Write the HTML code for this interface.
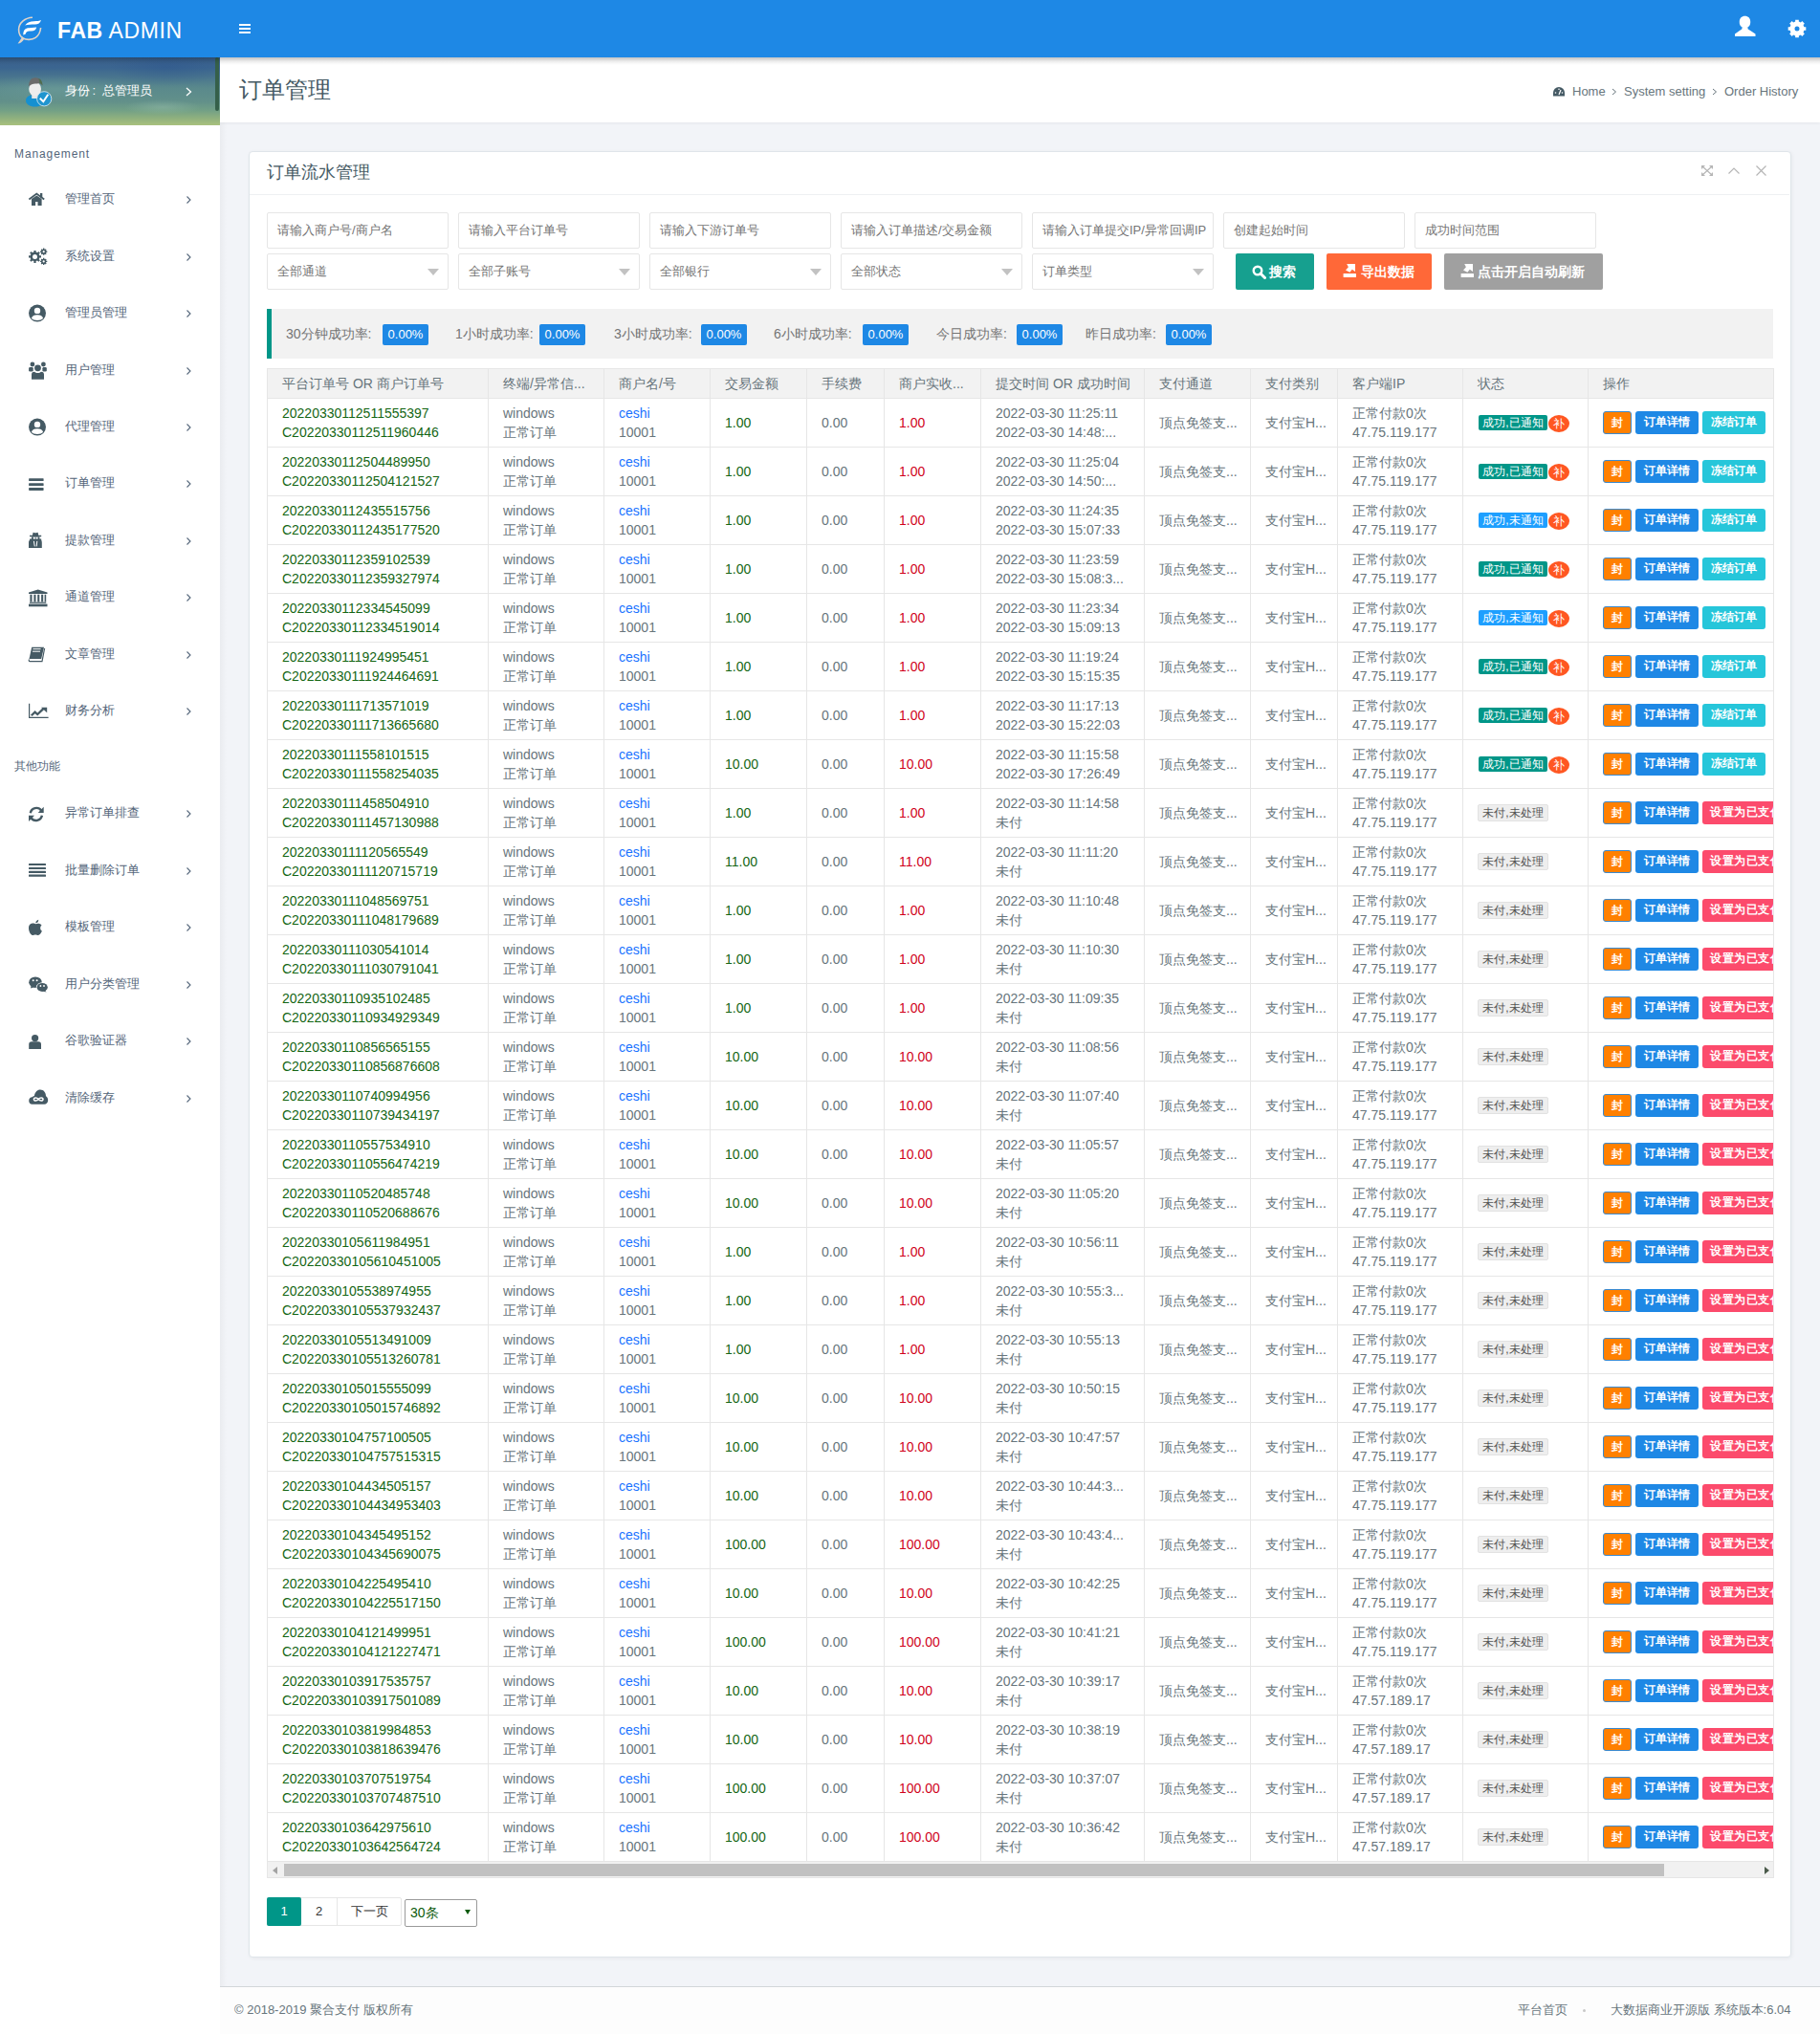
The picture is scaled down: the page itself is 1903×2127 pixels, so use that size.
<!DOCTYPE html><html><head><meta charset="utf-8"><style>
*{box-sizing:border-box;margin:0;padding:0}
html,body{width:1903px;height:2127px;overflow:hidden;background:#f2f4f8;font-family:"Liberation Sans",sans-serif;color:#67757c}
.a{position:absolute}
#hdr{left:0;top:0;width:1903px;height:60px;background:#1e88e5;z-index:5}
#hsh{left:0;top:60px;width:1903px;height:8px;z-index:6;background:linear-gradient(180deg,rgba(0,0,0,.23) 0,rgba(0,0,0,.2) 12%,rgba(0,0,0,.14) 30%,rgba(0,0,0,.08) 50%,rgba(0,0,0,.04) 70%,rgba(0,0,0,0) 100%)}
#side{left:0;top:60px;width:230px;height:2067px;background:#fff;z-index:3}
#prof{left:0;top:60px;width:230px;height:71px;z-index:4;overflow:hidden;
 background:linear-gradient(180deg,#3a628e 0%,#3b6590 15%,#4a768e 30%,#5a898c 45%,#62908a 65%,#72a086 78%,#90b17e 90%,#a9c17e 100%)}
#titlebar{left:230px;top:60px;width:1673px;height:68px;background:#fff;box-shadow:0 1px 3px rgba(0,0,0,.06)}
.mi{position:absolute;left:0;width:230px;height:20px;font-size:13px;line-height:20px;color:#54667a}
.mi .t{position:absolute;left:68px;top:0}
.mi .ch{position:absolute;left:193px;top:6px;width:10px;height:10px}
.mi svg.ic{position:absolute;left:28px;top:0}
#card{left:260px;top:158px;width:1613px;height:1889px;background:#fff;border:1px solid #dfe5ea;border-radius:4px;box-shadow:1px 1px 4px rgba(0,0,0,.05)}
.inp{position:absolute;height:38px;border:1px solid #e6e6e6;border-radius:2px;background:#fff;font-size:13px;line-height:36px;padding-left:10px;color:#757575}
.tri{position:absolute;width:0;height:0;border-left:6px solid transparent;border-right:6px solid transparent;border-top:7px solid #c2c2c2}
.btn{position:absolute;height:38px;line-height:38px;color:#fff;font-size:14px;text-align:center;border-radius:2px;font-weight:bold}
.lbl{position:absolute;font-size:14px;line-height:20px;color:#757575;top:339px}
.bdg{position:absolute;top:339px;height:22px;width:48px;background:#1e88e5;color:#fff;border-radius:2px;font-size:13px;line-height:22px;text-align:center}
.vl{position:absolute;width:1px;background:#e6e6e6}
.hl{position:absolute;height:1px;background:#e6e6e6}
.th{position:absolute;font-size:14px;line-height:30px;color:#67757c;white-space:nowrap}
.td{position:absolute;font-size:14px;line-height:20px;color:#67757c;white-space:nowrap}
.g{color:#146614}
.lk{color:#1a73ff}
.rd{color:#d0021b}
.st{position:absolute;height:16px;width:72px;border-radius:2px;font-size:12px;font-weight:500;line-height:16px;color:#fff;text-align:center;white-space:nowrap;overflow:hidden}
.bu{position:absolute;width:22px;height:18px;border-radius:50%;background:#ff5722;color:#fff;font-size:12px;font-weight:500;line-height:18px;text-align:center}
.bx{position:absolute;height:24px;line-height:23px;border-radius:3px;color:#fff;font-size:12px;font-weight:600;text-align:center;white-space:nowrap;overflow:hidden}
</style></head><body>
<div id="hdr" class="a">
<svg class="a" style="left:14px;top:14px" width="36" height="36" viewBox="0 0 36 36"><path d="M20 4.3 C12 4.6 5.6 10 5.6 17 C5.6 21.5 7.6 24.5 10.2 26 C13.5 28 19.5 27.8 23.2 25.3 C26.3 23.2 28.2 19.8 28.6 15" fill="none" stroke="#ddd3ca" stroke-width="1.6"/><path d="M9.6 24.2 L4.6 31.6 C7.2 31.4 9.6 30 11.2 26.8 Z" fill="#ddd3ca"/><path d="M12.2 12.6 C14.5 9.2 17.5 8.2 21.5 8.2 C24.8 8.2 27.2 7.8 29 7 C28 10.2 26 11.6 22.5 11.6 C18.5 11.6 15 11.6 12.2 12.6 Z" fill="#fff"/><path d="M10.3 22.6 C10.3 17.4 12.3 15.2 16.5 15.2 L24.2 14.6 C23.6 17.2 22 18.6 18.6 18.6 C15 18.6 13.4 19 12.6 21.8 Z" fill="#fff"/></svg>
<div class="a" style="left:60px;top:17px;font-size:23px;line-height:30px;color:#fff;white-space:nowrap;letter-spacing:.6px"><b>FAB</b> ADMIN</div>
<div class="a" style="left:250px;top:25px;width:12px;height:2px;background:#fff"></div><div class="a" style="left:250px;top:29px;width:12px;height:2px;background:#fff"></div><div class="a" style="left:250px;top:33px;width:12px;height:2px;background:#fff"></div>
<svg class="a" style="left:1813px;top:16px" width="24" height="23" viewBox="0 0 24 23"><path d="M11.5 0.7 C14.9 0.7 17.2 3 17.2 6.5 V7.6 C17.2 10.9 15 13.3 11.5 13.3 C8 13.3 5.8 10.9 5.8 7.6 V6.5 C5.8 3 8.1 0.7 11.5 0.7 Z" fill="#fff"/><path d="M8.5 12.5 H14.5 V14.3 L22.5 19.6 V22 H1 V19.6 L8.5 14.3 Z" fill="#fff"/></svg>
<svg class="a" style="left:1869px;top:19.5px" width="20" height="20" viewBox="0 0 20 20"><path fill="#fff" fill-rule="evenodd" d="M19.32 8.15 L19.32 11.85 L17.38 11.83 L16.51 13.92 L17.90 15.28 L15.28 17.90 L13.92 16.51 L11.83 17.38 L11.85 19.32 L8.15 19.32 L8.17 17.38 L6.08 16.51 L4.72 17.90 L2.10 15.28 L3.49 13.92 L2.62 11.83 L0.68 11.85 L0.68 8.15 L2.62 8.17 L3.49 6.08 L2.10 4.72 L4.72 2.10 L6.08 3.49 L8.17 2.62 L8.15 0.68 L11.85 0.68 L11.83 2.62 L13.92 3.49 L15.28 2.10 L17.90 4.72 L16.51 6.08 L17.38 8.17 Z M7.50 10.00 a2.50 2.50 0 1 0 5.00 0 a2.50 2.50 0 1 0 -5.00 0 Z"/></svg>
</div>
<div id="hsh" class="a"></div>
<div id="side" class="a"></div>
<div id="prof" class="a">
<div class="a" style="left:115px;top:-10px;width:120px;height:40px;background:radial-gradient(closest-side,rgba(40,80,140,.35),rgba(40,80,140,0) 100%)"></div><div class="a" style="left:-30px;top:18px;width:180px;height:30px;border-radius:50%;background:radial-gradient(closest-side,rgba(130,180,170,.3),rgba(130,180,170,0) 100%)"></div><div class="a" style="left:130px;top:44px;width:80px;height:16px;background:radial-gradient(closest-side,rgba(170,205,190,.3),rgba(170,205,190,0) 100%)"></div>
<div class="a" style="left:225px;top:0;width:4px;height:56px;border-radius:2px;background:#35604a"></div>
<svg class="a" style="left:22px;top:16px" width="36" height="38" viewBox="0 0 36 38"><path d="M5 29 C5 25.3 8.5 23.5 12.5 23.5 L18 23.5 C21.5 23.5 23.5 26 23.5 30 C23.5 34 19.5 35.5 14.5 35.5 C9 35.5 5 33 5 29 Z" fill="#1590d0"/><rect x="11.2" y="20" width="7" height="7" fill="#e6e6e6"/><ellipse cx="14.6" cy="17" rx="6.4" ry="7.6" fill="#ededed"/><path d="M8.2 14.5 C7.8 8.5 11 5.3 15 5.3 C19.2 5.3 22.4 8.2 22.4 13.5 C21.2 11.2 19.2 10.6 17 11.6 C14 11 10.2 11.6 8.2 14.5 Z" fill="#6b6b6b"/><path d="M18.5 6 C21 7 22.4 9.5 22.4 13.5 C21.6 12 20.6 11.2 19.4 11 Z" fill="#4f6e4f"/><circle cx="24.2" cy="27.3" r="7.6" fill="#2095cf" stroke="#cfe4ee" stroke-width=".9"/><path d="M19.8 26.8 L23.3 30.2 L28.3 22.8" fill="none" stroke="#fff" stroke-width="2"/></svg>
<div class="a" style="left:68px;top:25px;font-size:13px;line-height:20px;color:#fff;white-space:nowrap">身份<span style="margin:0 7px 0 2.5px">:</span>总管理员</div>
<svg class="a" style="left:194px;top:31px" width="7" height="10" viewBox="0 0 7 10"><path d="M1 1 L5.5 5 L1 9" fill="none" stroke="#fff" stroke-width="1.3"/></svg>
</div>
<div class="a" style="left:15px;top:152px;font-size:12px;line-height:18px;letter-spacing:.9px;color:#54667a;z-index:4">Management</div>
<div class="a" style="left:15px;top:792px;font-size:12px;line-height:18px;color:#54667a;z-index:4">其他功能</div>
<div class="mi" style="top:198px;z-index:4"><svg class="ic" width="24" height="22" viewBox="0 0 24 22" style="top:0"><path d="M2.4 10.6 L10.3 4.6 L18.2 10.6" fill="none" stroke="#455a64" stroke-width="1.9"/><rect x="14" y="4" width="2.3" height="4.6" fill="#455a64"/><path d="M5 10.1 L10.3 6.4 L15.6 10.1 V16.9 H11.5 V13 H9.1 V16.9 H5 Z" fill="#455a64"/></svg><span class="t">管理首页</span><svg class="ch" viewBox="0 0 10 10"><path d="M2.5 1.5 L6 5 L2.5 8.5" fill="none" stroke="#54667a" stroke-width="1.1"/></svg></div>
<div class="mi" style="top:258px;z-index:4"><svg class="ic" width="24" height="22" viewBox="0 0 24 22" style="top:0"><g fill="#455a64"><circle cx="8.5" cy="10.4" r="4.9"/><g stroke="#455a64" stroke-width="2.2"><path d="M8.5 3.9 V16.9 M2 10.4 H15 M3.9 5.8 L13.1 15 M13.1 5.8 L3.9 15"/></g><circle cx="17.7" cy="5.2" r="2.6"/><circle cx="17.7" cy="15.4" r="2.6"/><g stroke="#455a64" stroke-width="1.4"><path d="M17.7 1.6 V8.8 M14.1 5.2 H21.3 M15.2 2.7 L20.2 7.7 M20.2 2.7 L15.2 7.7"/><path d="M17.7 11.8 V19 M14.1 15.4 H21.3 M15.2 12.9 L20.2 17.9 M20.2 12.9 L15.2 17.9"/></g></g><circle cx="8.5" cy="10.4" r="2.5" fill="#fff"/><circle cx="17.7" cy="5.2" r="1.1" fill="#fff"/><circle cx="17.7" cy="15.4" r="1.1" fill="#fff"/></svg><span class="t">系统设置</span><svg class="ch" viewBox="0 0 10 10"><path d="M2.5 1.5 L6 5 L2.5 8.5" fill="none" stroke="#54667a" stroke-width="1.1"/></svg></div>
<div class="mi" style="top:317px;z-index:4"><svg class="ic" width="24" height="22" viewBox="0 0 24 22" style="top:0"><circle cx="11" cy="10.6" r="9" fill="#455a64"/><circle cx="11" cy="7.9" r="3.2" fill="#fff"/><path d="M4.9 15.8 C5.6 13.3 7.9 12.3 11 12.3 C14.1 12.3 16.4 13.3 17.1 15.8 C15.8 17.4 13.6 18 11 18 C8.4 18 6.2 17.4 4.9 15.8 Z" fill="#fff"/></svg><span class="t">管理员管理</span><svg class="ch" viewBox="0 0 10 10"><path d="M2.5 1.5 L6 5 L2.5 8.5" fill="none" stroke="#54667a" stroke-width="1.1"/></svg></div>
<div class="mi" style="top:377px;z-index:4"><svg class="ic" width="24" height="22" viewBox="0 0 24 22" style="top:0"><g fill="#455a64"><circle cx="5.9" cy="4" r="2.4"/><circle cx="17.4" cy="4" r="2.4"/><circle cx="11.5" cy="7.8" r="3.4"/><rect x="2.1" y="7" width="4.6" height="4.6" rx="1.3"/><rect x="16.4" y="7" width="4.4" height="4.6" rx="1.3"/><path d="M5 19.7 V14.5 C5 12.5 6.5 11.8 8 11.8 C9 12.6 10 13 11.5 13 C13 13 14 12.6 15 11.8 C16.5 11.8 18 12.5 18 14.5 V19.7 Z"/></g></svg><span class="t">用户管理</span><svg class="ch" viewBox="0 0 10 10"><path d="M2.5 1.5 L6 5 L2.5 8.5" fill="none" stroke="#54667a" stroke-width="1.1"/></svg></div>
<div class="mi" style="top:436px;z-index:4"><svg class="ic" width="24" height="22" viewBox="0 0 24 22" style="top:0"><circle cx="11" cy="10.6" r="9" fill="#455a64"/><circle cx="11" cy="7.9" r="3.2" fill="#fff"/><path d="M4.9 15.8 C5.6 13.3 7.9 12.3 11 12.3 C14.1 12.3 16.4 13.3 17.1 15.8 C15.8 17.4 13.6 18 11 18 C8.4 18 6.2 17.4 4.9 15.8 Z" fill="#fff"/></svg><span class="t">代理管理</span><svg class="ch" viewBox="0 0 10 10"><path d="M2.5 1.5 L6 5 L2.5 8.5" fill="none" stroke="#54667a" stroke-width="1.1"/></svg></div>
<div class="mi" style="top:495px;z-index:4"><svg class="ic" width="24" height="22" viewBox="0 0 24 22" style="top:0"><g fill="#455a64"><rect x="2.1" y="5.2" width="15.5" height="2.8" rx=".6"/><rect x="2.1" y="10.2" width="15.5" height="2.8" rx=".6"/><rect x="2.1" y="15.1" width="15.5" height="2.8" rx=".6"/></g></svg><span class="t">订单管理</span><svg class="ch" viewBox="0 0 10 10"><path d="M2.5 1.5 L6 5 L2.5 8.5" fill="none" stroke="#54667a" stroke-width="1.1"/></svg></div>
<div class="mi" style="top:555px;z-index:4"><svg class="ic" width="24" height="22" viewBox="0 0 24 22" style="top:0"><g fill="#455a64"><path d="M6.6 1.7 L8.6 2.2 H9.6 L11.6 1.7 L12.3 4.8 H15.2 V6.3 H3 V4.8 H5.9 Z"/><rect x="5" y="6.3" width="8.4" height="2.8"/><path d="M3 8.6 H15.2 V9.8 C15.6 10.5 15.8 11.3 15.8 12.5 V17.9 H2 V12.5 C2 11.3 2.3 10.5 3 9.8 Z"/></g><rect x="6.8" y="6.8" width="2" height="1.8" fill="#fff"/><rect x="9.6" y="6.8" width="2" height="1.8" fill="#fff"/><path d="M7.4 10.8 L8.3 16.4 M10.8 10.8 L10.2 16.4" stroke="#fff" stroke-width="1"/></svg><span class="t">提款管理</span><svg class="ch" viewBox="0 0 10 10"><path d="M2.5 1.5 L6 5 L2.5 8.5" fill="none" stroke="#54667a" stroke-width="1.1"/></svg></div>
<div class="mi" style="top:614px;z-index:4"><svg class="ic" width="24" height="22" viewBox="0 0 24 22" style="top:0"><g fill="#455a64"><path d="M11.7 2.5 L21.5 5.6 V7 H2 V5.6 Z"/><rect x="3.4" y="7.7" width="2.1" height="7.8"/><rect x="7.4" y="7.7" width="2.1" height="7.8"/><rect x="11.2" y="7.7" width="2.1" height="7.8"/><rect x="15.1" y="7.7" width="2.1" height="7.8"/><rect x="18.6" y="7.7" width="1.6" height="7.8"/><rect x="3" y="15.6" width="17.2" height="1.2"/><rect x="2" y="17.6" width="19.5" height="2.7"/></g></svg><span class="t">通道管理</span><svg class="ch" viewBox="0 0 10 10"><path d="M2.5 1.5 L6 5 L2.5 8.5" fill="none" stroke="#54667a" stroke-width="1.1"/></svg></div>
<div class="mi" style="top:674px;z-index:4"><svg class="ic" width="24" height="22" viewBox="0 0 24 22" style="top:0"><path d="M5.2 2.7 H18 L15.2 15 H2.5 Z" fill="#455a64"/><path d="M6.4 4.7 H14.6 M6 7.2 H14" stroke="#fff" stroke-width="1"/><path d="M18.6 4 L16 17.6 H3.2 C2.3 17.6 2 16.6 2.5 15.6" fill="none" stroke="#455a64" stroke-width="1.2"/></svg><span class="t">文章管理</span><svg class="ch" viewBox="0 0 10 10"><path d="M2.5 1.5 L6 5 L2.5 8.5" fill="none" stroke="#54667a" stroke-width="1.1"/></svg></div>
<div class="mi" style="top:733px;z-index:4"><svg class="ic" width="24" height="22" viewBox="0 0 24 22" style="top:0"><path d="M2.6 2.8 V17.4 H22.6" fill="none" stroke="#455a64" stroke-width="1.2"/><path d="M4.8 15.3 L8.6 11.6 L11.2 14 L17.4 8.1" fill="none" stroke="#455a64" stroke-width="2.3"/><path d="M15 6.8 H21.2 V12.2 Z" fill="#455a64"/></svg><span class="t">财务分析</span><svg class="ch" viewBox="0 0 10 10"><path d="M2.5 1.5 L6 5 L2.5 8.5" fill="none" stroke="#54667a" stroke-width="1.1"/></svg></div>
<div class="mi" style="top:840px;z-index:4"><svg class="ic" width="24" height="22" viewBox="0 0 24 22" style="top:0"><g fill="none" stroke="#455a64" stroke-width="2.4"><path d="M3.8 10.2 A6.3 6.3 0 0 1 15.2 7.6"/><path d="M15.9 12.8 A6.3 6.3 0 0 1 4.5 15.2"/></g><g fill="#455a64"><path d="M17.7 3.8 V10 H11.7 Z"/><path d="M2 19 V12.8 H8 Z"/></g></svg><span class="t">异常订单排查</span><svg class="ch" viewBox="0 0 10 10"><path d="M2.5 1.5 L6 5 L2.5 8.5" fill="none" stroke="#54667a" stroke-width="1.1"/></svg></div>
<div class="mi" style="top:900px;z-index:4"><svg class="ic" width="24" height="22" viewBox="0 0 24 22" style="top:0"><g fill="#455a64"><rect x="2" y="3" width="18" height="2.1" rx=".5"/><rect x="2" y="6.9" width="18" height="2.1" rx=".5"/><rect x="2" y="10.8" width="18" height="2.1" rx=".5"/><rect x="2" y="14.6" width="18" height="2.1" rx=".5"/></g></svg><span class="t">批量删除订单</span><svg class="ch" viewBox="0 0 10 10"><path d="M2.5 1.5 L6 5 L2.5 8.5" fill="none" stroke="#54667a" stroke-width="1.1"/></svg></div>
<div class="mi" style="top:959px;z-index:4"><svg class="ic" width="24" height="22" viewBox="0 0 24 22" style="top:0"><path d="M9.2 7.3 C7.8 6.2 2 5.7 2 11.6 C2 15.3 4.3 19.1 6 19.1 C7.2 19.1 7.6 18.4 9 18.4 C10.4 18.4 10.8 19.1 12 19.1 C13.5 19.1 15.2 16.6 15.9 14.6 C13.8 13.6 13.6 9.9 15.6 8.5 C14.3 6.5 11 6.4 9.2 7.3 Z" fill="#455a64"/><path d="M9.3 6.3 C9.3 4.5 10.6 2.9 12.3 2.7 C12.3 4.6 11.1 6.1 9.3 6.3 Z" fill="#455a64"/></svg><span class="t">模板管理</span><svg class="ch" viewBox="0 0 10 10"><path d="M2.5 1.5 L6 5 L2.5 8.5" fill="none" stroke="#54667a" stroke-width="1.1"/></svg></div>
<div class="mi" style="top:1019px;z-index:4"><svg class="ic" width="24" height="22" viewBox="0 0 24 22" style="top:0"><ellipse cx="9" cy="8.2" rx="6.8" ry="5.8" fill="#455a64"/><path d="M4.5 12 L4 14.6 L7.5 13.3 Z" fill="#455a64"/><circle cx="6.7" cy="6.2" r="1" fill="#fff"/><circle cx="10.6" cy="6.2" r="1" fill="#fff"/><ellipse cx="16.2" cy="13.4" rx="6.4" ry="5.2" fill="#fff"/><ellipse cx="16.2" cy="13.4" rx="5.6" ry="4.5" fill="#455a64"/><path d="M18.8 16.5 L20.6 18.6 L16.5 17.6 Z" fill="#455a64"/><circle cx="14.4" cy="12" r=".9" fill="#fff"/><circle cx="18" cy="12" r=".9" fill="#fff"/></svg><span class="t">用户分类管理</span><svg class="ch" viewBox="0 0 10 10"><path d="M2.5 1.5 L6 5 L2.5 8.5" fill="none" stroke="#54667a" stroke-width="1.1"/></svg></div>
<div class="mi" style="top:1078px;z-index:4"><svg class="ic" width="24" height="22" viewBox="0 0 24 22" style="top:0"><circle cx="8.6" cy="7.6" r="3.6" fill="#455a64"/><path d="M2.2 18.9 V14 C2.2 12 3.3 11.2 5 11.2 H12.2 C13.9 11.2 15 12 15 14 V18.9 Z" fill="#455a64"/></svg><span class="t">谷歌验证器</span><svg class="ch" viewBox="0 0 10 10"><path d="M2.5 1.5 L6 5 L2.5 8.5" fill="none" stroke="#54667a" stroke-width="1.1"/></svg></div>
<div class="mi" style="top:1138px;z-index:4"><svg class="ic" width="24" height="22" viewBox="0 0 24 22" style="top:0"><path d="M5.6 16.8 C3.6 16.8 2.2 15.2 2.2 13 C2.2 10.9 3.7 9.4 5.7 9.3 C6.1 8.6 6.9 8 7.9 7.9 C8.6 4.1 11 1.5 14.1 1.5 C17.6 1.5 20 4.3 20 8.3 C21.4 9.1 22.2 10.8 22.2 12.6 C22.2 15 20.5 16.8 18.4 16.8 Z" fill="#455a64"/><path d="M12.2 11.5 C10.6 9.5 7.4 9.4 7.4 11.5 C7.4 13.6 10.6 13.5 12.2 11.5 C13.8 9.5 17 9.4 17 11.5 C17 13.6 13.8 13.5 12.2 11.5 Z" fill="none" stroke="#fff" stroke-width="1.5"/></svg><span class="t">清除缓存</span><svg class="ch" viewBox="0 0 10 10"><path d="M2.5 1.5 L6 5 L2.5 8.5" fill="none" stroke="#54667a" stroke-width="1.1"/></svg></div>
<div id="titlebar" class="a"></div>
<div class="a" style="left:250px;top:78px;font-size:24px;line-height:32px;color:#455a64;white-space:nowrap">订单管理</div>
<svg class="a" style="left:1624px;top:91px" width="12" height="10" viewBox="0 0 12 10"><path d="M6 0 A6 6 0 0 0 0 6 V9.5 H12 V6 A6 6 0 0 0 6 0z" fill="#455a64"/><path d="M6 8 L8 3" stroke="#fff" stroke-width="1.2"/><circle cx="2.5" cy="6" r=".8" fill="#fff"/><circle cx="9.5" cy="6" r=".8" fill="#fff"/><circle cx="6" cy="2.3" r=".8" fill="#fff"/></svg>
<div class="a" style="left:1644px;top:87px;font-size:13px;line-height:18px;color:#67757c;white-space:nowrap">Home</div>
<svg class="a" style="left:1685px;top:92px" width="6" height="8" viewBox="0 0 6 8"><path d="M1 1 L4.5 4 L1 7" fill="none" stroke="#67757c" stroke-width="1"/></svg>
<div class="a" style="left:1698px;top:87px;font-size:13px;line-height:18px;color:#67757c;white-space:nowrap">System setting</div>
<svg class="a" style="left:1790px;top:92px" width="6" height="8" viewBox="0 0 6 8"><path d="M1 1 L4.5 4 L1 7" fill="none" stroke="#67757c" stroke-width="1"/></svg>
<div class="a" style="left:1803px;top:87px;font-size:13px;line-height:18px;color:#67757c;white-space:nowrap">Order History</div>
<div class="a" style="left:230px;top:128px;width:7px;height:1949px;background:linear-gradient(90deg,rgba(0,0,0,.035),rgba(0,0,0,0))"></div>
<div id="card" class="a"></div>
<div class="a" style="left:261px;top:203px;width:1610px;height:1px;background:#eef0f2"></div>
<div class="a" style="left:279px;top:168px;font-size:18px;line-height:24px;color:#455a64;white-space:nowrap">订单流水管理</div>
<svg class="a" style="left:1779px;top:173px" width="12" height="11" viewBox="0 0 12 11"><path d="M1 1 L11 10 M11 1 L1 10" stroke="#b5b5b5" stroke-width="1.1"/><path d="M0 0 H4 L0 4z M12 0 H8 L12 4z M0 11 H4 L0 7z M12 11 H8 L12 7z" fill="#b5b5b5"/></svg>
<svg class="a" style="left:1807px;top:175px" width="12" height="7" viewBox="0 0 12 7"><path d="M0.5 6.5 L6 1 L11.5 6.5" fill="none" stroke="#b5b5b5" stroke-width="1.2"/></svg>
<svg class="a" style="left:1836px;top:173px" width="11" height="11" viewBox="0 0 11 11"><path d="M0.5 0.5 L10.5 10.5 M10.5 0.5 L0.5 10.5" fill="none" stroke="#b5b5b5" stroke-width="1.2"/></svg>
<div class="inp" style="left:279px;top:222px;width:190px;white-space:nowrap;overflow:hidden">请输入商户号/商户名</div>
<div class="inp" style="left:479px;top:222px;width:190px;white-space:nowrap;overflow:hidden">请输入平台订单号</div>
<div class="inp" style="left:679px;top:222px;width:190px;white-space:nowrap;overflow:hidden">请输入下游订单号</div>
<div class="inp" style="left:879px;top:222px;width:190px;white-space:nowrap;overflow:hidden">请输入订单描述/交易金额</div>
<div class="inp" style="left:1079px;top:222px;width:190px;white-space:nowrap;overflow:hidden">请输入订单提交IP/异常回调IP</div>
<div class="inp" style="left:1279px;top:222px;width:190px;white-space:nowrap;overflow:hidden">创建起始时间</div>
<div class="inp" style="left:1479px;top:222px;width:190px;white-space:nowrap;overflow:hidden">成功时间范围</div>
<div class="inp" style="left:279px;top:265px;width:190px">全部通道</div>
<div class="tri" style="left:447px;top:281px"></div>
<div class="inp" style="left:479px;top:265px;width:190px">全部子账号</div>
<div class="tri" style="left:647px;top:281px"></div>
<div class="inp" style="left:679px;top:265px;width:190px">全部银行</div>
<div class="tri" style="left:847px;top:281px"></div>
<div class="inp" style="left:879px;top:265px;width:190px">全部状态</div>
<div class="tri" style="left:1047px;top:281px"></div>
<div class="inp" style="left:1079px;top:265px;width:190px">订单类型</div>
<div class="tri" style="left:1247px;top:281px"></div>
<div class="btn" style="left:1292px;top:265px;width:82px;background:#16a08f">
<svg style="position:absolute;left:17px;top:12px" width="15" height="15" viewBox="0 0 15 15"><circle cx="6" cy="6" r="4.3" fill="none" stroke="#fff" stroke-width="2.4"/><path d="M9 9 L13.5 13.5" stroke="#fff" stroke-width="3" stroke-linecap="round"/></svg><span style="position:absolute;left:35px;top:0">搜索</span></div>
<div class="btn" style="left:1387px;top:265px;width:110px;background:#ff6838">
<svg style="position:absolute;left:13px;top:5px" width="24" height="24" viewBox="0 0 24 24"><path d="M8.2 6 H17 V14 L13.8 11.8 L11.4 14.8 L7 12.6 L9.9 9.2 Z" fill="#fff"/><rect x="4.6" y="16" width="13.4" height="4" rx=".6" fill="#fff"/></svg><span style="position:absolute;left:36px;top:0">导出数据</span></div>
<div class="btn" style="left:1510px;top:265px;width:166px;background:#a0a0a0">
<svg style="position:absolute;left:13px;top:5px" width="24" height="24" viewBox="0 0 24 24"><path d="M8.2 6 H17 V14 L13.8 11.8 L11.4 14.8 L7 12.6 L9.9 9.2 Z" fill="#fff"/><rect x="4.6" y="16" width="13.4" height="4" rx=".6" fill="#fff"/></svg><span style="position:absolute;left:35px;top:0">点击开启自动刷新</span></div>
<div class="a" style="left:279px;top:323px;width:1575px;height:52px;background:#f2f2f2;border-left:5px solid #009688"></div>
<div class="lbl" style="left:299px">30分钟成功率:</div>
<div class="bdg" style="left:400px">0.00%</div>
<div class="lbl" style="left:476px">1小时成功率:</div>
<div class="bdg" style="left:564px">0.00%</div>
<div class="lbl" style="left:642px">3小时成功率:</div>
<div class="bdg" style="left:733px">0.00%</div>
<div class="lbl" style="left:809px">6小时成功率:</div>
<div class="bdg" style="left:902px">0.00%</div>
<div class="lbl" style="left:979px">今日成功率:</div>
<div class="bdg" style="left:1063px">0.00%</div>
<div class="lbl" style="left:1135px">昨日成功率:</div>
<div class="bdg" style="left:1219px">0.00%</div>
<div class="a" style="left:279px;top:385px;width:1576px;height:31px;background:#f2f2f2"></div>
<div class="vl" style="left:279px;top:385px;height:1561px"></div>
<div class="vl" style="left:510px;top:385px;height:1561px"></div>
<div class="vl" style="left:631px;top:385px;height:1561px"></div>
<div class="vl" style="left:742px;top:385px;height:1561px"></div>
<div class="vl" style="left:843px;top:385px;height:1561px"></div>
<div class="vl" style="left:924px;top:385px;height:1561px"></div>
<div class="vl" style="left:1025px;top:385px;height:1561px"></div>
<div class="vl" style="left:1196px;top:385px;height:1561px"></div>
<div class="vl" style="left:1307px;top:385px;height:1561px"></div>
<div class="vl" style="left:1398px;top:385px;height:1561px"></div>
<div class="vl" style="left:1529px;top:385px;height:1561px"></div>
<div class="vl" style="left:1660px;top:385px;height:1561px"></div>
<div class="vl" style="left:1854px;top:385px;height:1579px"></div>
<div class="hl" style="left:279px;top:385px;width:1576px"></div>
<div class="hl" style="left:279px;top:416px;width:1576px"></div>
<div class="hl" style="left:279px;top:467px;width:1576px"></div>
<div class="hl" style="left:279px;top:518px;width:1576px"></div>
<div class="hl" style="left:279px;top:569px;width:1576px"></div>
<div class="hl" style="left:279px;top:620px;width:1576px"></div>
<div class="hl" style="left:279px;top:671px;width:1576px"></div>
<div class="hl" style="left:279px;top:722px;width:1576px"></div>
<div class="hl" style="left:279px;top:773px;width:1576px"></div>
<div class="hl" style="left:279px;top:824px;width:1576px"></div>
<div class="hl" style="left:279px;top:875px;width:1576px"></div>
<div class="hl" style="left:279px;top:926px;width:1576px"></div>
<div class="hl" style="left:279px;top:977px;width:1576px"></div>
<div class="hl" style="left:279px;top:1028px;width:1576px"></div>
<div class="hl" style="left:279px;top:1079px;width:1576px"></div>
<div class="hl" style="left:279px;top:1130px;width:1576px"></div>
<div class="hl" style="left:279px;top:1181px;width:1576px"></div>
<div class="hl" style="left:279px;top:1232px;width:1576px"></div>
<div class="hl" style="left:279px;top:1283px;width:1576px"></div>
<div class="hl" style="left:279px;top:1334px;width:1576px"></div>
<div class="hl" style="left:279px;top:1385px;width:1576px"></div>
<div class="hl" style="left:279px;top:1436px;width:1576px"></div>
<div class="hl" style="left:279px;top:1487px;width:1576px"></div>
<div class="hl" style="left:279px;top:1538px;width:1576px"></div>
<div class="hl" style="left:279px;top:1589px;width:1576px"></div>
<div class="hl" style="left:279px;top:1640px;width:1576px"></div>
<div class="hl" style="left:279px;top:1691px;width:1576px"></div>
<div class="hl" style="left:279px;top:1742px;width:1576px"></div>
<div class="hl" style="left:279px;top:1793px;width:1576px"></div>
<div class="hl" style="left:279px;top:1844px;width:1576px"></div>
<div class="hl" style="left:279px;top:1895px;width:1576px"></div>
<div class="hl" style="left:279px;top:1946px;width:1576px"></div>
<div class="a" style="left:279px;top:1947px;width:1575px;height:17px;background:#f1f1f1;border-left:1px solid #e6e6e6;border-bottom:1px solid #e6e6e6"></div>
<div class="a" style="left:297px;top:1949px;width:1443px;height:13px;background:#c1c1c1"></div>
<svg class="a" style="left:285px;top:1952px" width="5" height="8" viewBox="0 0 5 8"><path d="M5 0 L0 4 L5 8 Z" fill="#a3a3a3"/></svg>
<svg class="a" style="left:1845px;top:1952px" width="5" height="8" viewBox="0 0 5 8"><path d="M0 0 L5 4 L0 8 Z" fill="#4a5a4a"/></svg>
<div class="th" style="left:295px;top:386px">平台订单号 OR 商户订单号</div>
<div class="th" style="left:526px;top:386px">终端/异常信...</div>
<div class="th" style="left:647px;top:386px">商户名/号</div>
<div class="th" style="left:758px;top:386px">交易金额</div>
<div class="th" style="left:859px;top:386px">手续费</div>
<div class="th" style="left:940px;top:386px">商户实收...</div>
<div class="th" style="left:1041px;top:386px">提交时间 OR 成功时间</div>
<div class="th" style="left:1212px;top:386px">支付通道</div>
<div class="th" style="left:1323px;top:386px">支付类别</div>
<div class="th" style="left:1414px;top:386px">客户端IP</div>
<div class="th" style="left:1545px;top:386px">状态</div>
<div class="th" style="left:1676px;top:386px">操作</div>
<div class="td g" style="left:295px;top:422px">20220330112511555397<br>C20220330112511960446</div>
<div class="td" style="left:526px;top:422px">windows<br>正常订单</div>
<div class="td" style="left:647px;top:422px"><span class="lk">ceshi</span><br>10001</div>
<div class="td g" style="left:758px;top:432px">1.00</div>
<div class="td" style="left:859px;top:432px">0.00</div>
<div class="td rd" style="left:940px;top:432px">1.00</div>
<div class="td" style="left:1041px;top:422px">2022-03-30 11:25:11<br>2022-03-30 14:48:...</div>
<div class="td" style="left:1212px;top:432px">顶点免签支...</div>
<div class="td" style="left:1323px;top:432px">支付宝H...</div>
<div class="td" style="left:1414px;top:422px">正常付款0次<br>47.75.119.177</div>
<div class="st" style="left:1546px;top:434px;background:#009688">成功,已通知</div>
<div class="bu" style="left:1619px;top:434px">补</div>
<div class="bx" style="left:1676px;top:430px;width:30px;background:#ff8000;border:1px solid #3a8ad0">封</div>
<div class="bx" style="left:1710px;top:430px;width:66px;background:#1e88e5">订单详情</div>
<div class="bx" style="left:1780px;top:430px;width:66px;background:#26c6da">冻结订单</div>
<div class="td g" style="left:295px;top:473px">20220330112504489950<br>C20220330112504121527</div>
<div class="td" style="left:526px;top:473px">windows<br>正常订单</div>
<div class="td" style="left:647px;top:473px"><span class="lk">ceshi</span><br>10001</div>
<div class="td g" style="left:758px;top:483px">1.00</div>
<div class="td" style="left:859px;top:483px">0.00</div>
<div class="td rd" style="left:940px;top:483px">1.00</div>
<div class="td" style="left:1041px;top:473px">2022-03-30 11:25:04<br>2022-03-30 14:50:...</div>
<div class="td" style="left:1212px;top:483px">顶点免签支...</div>
<div class="td" style="left:1323px;top:483px">支付宝H...</div>
<div class="td" style="left:1414px;top:473px">正常付款0次<br>47.75.119.177</div>
<div class="st" style="left:1546px;top:485px;background:#009688">成功,已通知</div>
<div class="bu" style="left:1619px;top:485px">补</div>
<div class="bx" style="left:1676px;top:481px;width:30px;background:#ff8000;border:1px solid #3a8ad0">封</div>
<div class="bx" style="left:1710px;top:481px;width:66px;background:#1e88e5">订单详情</div>
<div class="bx" style="left:1780px;top:481px;width:66px;background:#26c6da">冻结订单</div>
<div class="td g" style="left:295px;top:524px">20220330112435515756<br>C20220330112435177520</div>
<div class="td" style="left:526px;top:524px">windows<br>正常订单</div>
<div class="td" style="left:647px;top:524px"><span class="lk">ceshi</span><br>10001</div>
<div class="td g" style="left:758px;top:534px">1.00</div>
<div class="td" style="left:859px;top:534px">0.00</div>
<div class="td rd" style="left:940px;top:534px">1.00</div>
<div class="td" style="left:1041px;top:524px">2022-03-30 11:24:35<br>2022-03-30 15:07:33</div>
<div class="td" style="left:1212px;top:534px">顶点免签支...</div>
<div class="td" style="left:1323px;top:534px">支付宝H...</div>
<div class="td" style="left:1414px;top:524px">正常付款0次<br>47.75.119.177</div>
<div class="st" style="left:1546px;top:536px;background:#1e9fff">成功,未通知</div>
<div class="bu" style="left:1619px;top:536px">补</div>
<div class="bx" style="left:1676px;top:532px;width:30px;background:#ff8000;border:1px solid #3a8ad0">封</div>
<div class="bx" style="left:1710px;top:532px;width:66px;background:#1e88e5">订单详情</div>
<div class="bx" style="left:1780px;top:532px;width:66px;background:#26c6da">冻结订单</div>
<div class="td g" style="left:295px;top:575px">20220330112359102539<br>C20220330112359327974</div>
<div class="td" style="left:526px;top:575px">windows<br>正常订单</div>
<div class="td" style="left:647px;top:575px"><span class="lk">ceshi</span><br>10001</div>
<div class="td g" style="left:758px;top:585px">1.00</div>
<div class="td" style="left:859px;top:585px">0.00</div>
<div class="td rd" style="left:940px;top:585px">1.00</div>
<div class="td" style="left:1041px;top:575px">2022-03-30 11:23:59<br>2022-03-30 15:08:3...</div>
<div class="td" style="left:1212px;top:585px">顶点免签支...</div>
<div class="td" style="left:1323px;top:585px">支付宝H...</div>
<div class="td" style="left:1414px;top:575px">正常付款0次<br>47.75.119.177</div>
<div class="st" style="left:1546px;top:587px;background:#009688">成功,已通知</div>
<div class="bu" style="left:1619px;top:587px">补</div>
<div class="bx" style="left:1676px;top:583px;width:30px;background:#ff8000;border:1px solid #3a8ad0">封</div>
<div class="bx" style="left:1710px;top:583px;width:66px;background:#1e88e5">订单详情</div>
<div class="bx" style="left:1780px;top:583px;width:66px;background:#26c6da">冻结订单</div>
<div class="td g" style="left:295px;top:626px">20220330112334545099<br>C20220330112334519014</div>
<div class="td" style="left:526px;top:626px">windows<br>正常订单</div>
<div class="td" style="left:647px;top:626px"><span class="lk">ceshi</span><br>10001</div>
<div class="td g" style="left:758px;top:636px">1.00</div>
<div class="td" style="left:859px;top:636px">0.00</div>
<div class="td rd" style="left:940px;top:636px">1.00</div>
<div class="td" style="left:1041px;top:626px">2022-03-30 11:23:34<br>2022-03-30 15:09:13</div>
<div class="td" style="left:1212px;top:636px">顶点免签支...</div>
<div class="td" style="left:1323px;top:636px">支付宝H...</div>
<div class="td" style="left:1414px;top:626px">正常付款0次<br>47.75.119.177</div>
<div class="st" style="left:1546px;top:638px;background:#1e9fff">成功,未通知</div>
<div class="bu" style="left:1619px;top:638px">补</div>
<div class="bx" style="left:1676px;top:634px;width:30px;background:#ff8000;border:1px solid #3a8ad0">封</div>
<div class="bx" style="left:1710px;top:634px;width:66px;background:#1e88e5">订单详情</div>
<div class="bx" style="left:1780px;top:634px;width:66px;background:#26c6da">冻结订单</div>
<div class="td g" style="left:295px;top:677px">20220330111924995451<br>C20220330111924464691</div>
<div class="td" style="left:526px;top:677px">windows<br>正常订单</div>
<div class="td" style="left:647px;top:677px"><span class="lk">ceshi</span><br>10001</div>
<div class="td g" style="left:758px;top:687px">1.00</div>
<div class="td" style="left:859px;top:687px">0.00</div>
<div class="td rd" style="left:940px;top:687px">1.00</div>
<div class="td" style="left:1041px;top:677px">2022-03-30 11:19:24<br>2022-03-30 15:15:35</div>
<div class="td" style="left:1212px;top:687px">顶点免签支...</div>
<div class="td" style="left:1323px;top:687px">支付宝H...</div>
<div class="td" style="left:1414px;top:677px">正常付款0次<br>47.75.119.177</div>
<div class="st" style="left:1546px;top:689px;background:#009688">成功,已通知</div>
<div class="bu" style="left:1619px;top:689px">补</div>
<div class="bx" style="left:1676px;top:685px;width:30px;background:#ff8000;border:1px solid #3a8ad0">封</div>
<div class="bx" style="left:1710px;top:685px;width:66px;background:#1e88e5">订单详情</div>
<div class="bx" style="left:1780px;top:685px;width:66px;background:#26c6da">冻结订单</div>
<div class="td g" style="left:295px;top:728px">20220330111713571019<br>C20220330111713665680</div>
<div class="td" style="left:526px;top:728px">windows<br>正常订单</div>
<div class="td" style="left:647px;top:728px"><span class="lk">ceshi</span><br>10001</div>
<div class="td g" style="left:758px;top:738px">1.00</div>
<div class="td" style="left:859px;top:738px">0.00</div>
<div class="td rd" style="left:940px;top:738px">1.00</div>
<div class="td" style="left:1041px;top:728px">2022-03-30 11:17:13<br>2022-03-30 15:22:03</div>
<div class="td" style="left:1212px;top:738px">顶点免签支...</div>
<div class="td" style="left:1323px;top:738px">支付宝H...</div>
<div class="td" style="left:1414px;top:728px">正常付款0次<br>47.75.119.177</div>
<div class="st" style="left:1546px;top:740px;background:#009688">成功,已通知</div>
<div class="bu" style="left:1619px;top:740px">补</div>
<div class="bx" style="left:1676px;top:736px;width:30px;background:#ff8000;border:1px solid #3a8ad0">封</div>
<div class="bx" style="left:1710px;top:736px;width:66px;background:#1e88e5">订单详情</div>
<div class="bx" style="left:1780px;top:736px;width:66px;background:#26c6da">冻结订单</div>
<div class="td g" style="left:295px;top:779px">20220330111558101515<br>C20220330111558254035</div>
<div class="td" style="left:526px;top:779px">windows<br>正常订单</div>
<div class="td" style="left:647px;top:779px"><span class="lk">ceshi</span><br>10001</div>
<div class="td g" style="left:758px;top:789px">10.00</div>
<div class="td" style="left:859px;top:789px">0.00</div>
<div class="td rd" style="left:940px;top:789px">10.00</div>
<div class="td" style="left:1041px;top:779px">2022-03-30 11:15:58<br>2022-03-30 17:26:49</div>
<div class="td" style="left:1212px;top:789px">顶点免签支...</div>
<div class="td" style="left:1323px;top:789px">支付宝H...</div>
<div class="td" style="left:1414px;top:779px">正常付款0次<br>47.75.119.177</div>
<div class="st" style="left:1546px;top:791px;background:#009688">成功,已通知</div>
<div class="bu" style="left:1619px;top:791px">补</div>
<div class="bx" style="left:1676px;top:787px;width:30px;background:#ff8000;border:1px solid #3a8ad0">封</div>
<div class="bx" style="left:1710px;top:787px;width:66px;background:#1e88e5">订单详情</div>
<div class="bx" style="left:1780px;top:787px;width:66px;background:#26c6da">冻结订单</div>
<div class="td g" style="left:295px;top:830px">20220330111458504910<br>C20220330111457130988</div>
<div class="td" style="left:526px;top:830px">windows<br>正常订单</div>
<div class="td" style="left:647px;top:830px"><span class="lk">ceshi</span><br>10001</div>
<div class="td g" style="left:758px;top:840px">1.00</div>
<div class="td" style="left:859px;top:840px">0.00</div>
<div class="td rd" style="left:940px;top:840px">1.00</div>
<div class="td" style="left:1041px;top:830px">2022-03-30 11:14:58<br>未付</div>
<div class="td" style="left:1212px;top:840px">顶点免签支...</div>
<div class="td" style="left:1323px;top:840px">支付宝H...</div>
<div class="td" style="left:1414px;top:830px">正常付款0次<br>47.75.119.177</div>
<div class="st" style="left:1545px;top:841px;width:74px;height:18px;line-height:16px;background:#eee;border:1px solid #e2e2e2;color:#555">未付,未处理</div>
<div class="bx" style="left:1676px;top:838px;width:30px;background:#ff8000;border:1px solid #3a8ad0">封</div>
<div class="bx" style="left:1710px;top:838px;width:66px;background:#1e88e5">订单详情</div>
<div class="bx" style="left:1780px;top:838px;width:74px;background:#fc4b6c;border-radius:3px 0 0 3px;text-align:left;padding-left:8px;letter-spacing:.5px">设置为已支付</div>
<div class="td g" style="left:295px;top:881px">20220330111120565549<br>C20220330111120715719</div>
<div class="td" style="left:526px;top:881px">windows<br>正常订单</div>
<div class="td" style="left:647px;top:881px"><span class="lk">ceshi</span><br>10001</div>
<div class="td g" style="left:758px;top:891px">11.00</div>
<div class="td" style="left:859px;top:891px">0.00</div>
<div class="td rd" style="left:940px;top:891px">11.00</div>
<div class="td" style="left:1041px;top:881px">2022-03-30 11:11:20<br>未付</div>
<div class="td" style="left:1212px;top:891px">顶点免签支...</div>
<div class="td" style="left:1323px;top:891px">支付宝H...</div>
<div class="td" style="left:1414px;top:881px">正常付款0次<br>47.75.119.177</div>
<div class="st" style="left:1545px;top:892px;width:74px;height:18px;line-height:16px;background:#eee;border:1px solid #e2e2e2;color:#555">未付,未处理</div>
<div class="bx" style="left:1676px;top:889px;width:30px;background:#ff8000;border:1px solid #3a8ad0">封</div>
<div class="bx" style="left:1710px;top:889px;width:66px;background:#1e88e5">订单详情</div>
<div class="bx" style="left:1780px;top:889px;width:74px;background:#fc4b6c;border-radius:3px 0 0 3px;text-align:left;padding-left:8px;letter-spacing:.5px">设置为已支付</div>
<div class="td g" style="left:295px;top:932px">20220330111048569751<br>C20220330111048179689</div>
<div class="td" style="left:526px;top:932px">windows<br>正常订单</div>
<div class="td" style="left:647px;top:932px"><span class="lk">ceshi</span><br>10001</div>
<div class="td g" style="left:758px;top:942px">1.00</div>
<div class="td" style="left:859px;top:942px">0.00</div>
<div class="td rd" style="left:940px;top:942px">1.00</div>
<div class="td" style="left:1041px;top:932px">2022-03-30 11:10:48<br>未付</div>
<div class="td" style="left:1212px;top:942px">顶点免签支...</div>
<div class="td" style="left:1323px;top:942px">支付宝H...</div>
<div class="td" style="left:1414px;top:932px">正常付款0次<br>47.75.119.177</div>
<div class="st" style="left:1545px;top:943px;width:74px;height:18px;line-height:16px;background:#eee;border:1px solid #e2e2e2;color:#555">未付,未处理</div>
<div class="bx" style="left:1676px;top:940px;width:30px;background:#ff8000;border:1px solid #3a8ad0">封</div>
<div class="bx" style="left:1710px;top:940px;width:66px;background:#1e88e5">订单详情</div>
<div class="bx" style="left:1780px;top:940px;width:74px;background:#fc4b6c;border-radius:3px 0 0 3px;text-align:left;padding-left:8px;letter-spacing:.5px">设置为已支付</div>
<div class="td g" style="left:295px;top:983px">20220330111030541014<br>C20220330111030791041</div>
<div class="td" style="left:526px;top:983px">windows<br>正常订单</div>
<div class="td" style="left:647px;top:983px"><span class="lk">ceshi</span><br>10001</div>
<div class="td g" style="left:758px;top:993px">1.00</div>
<div class="td" style="left:859px;top:993px">0.00</div>
<div class="td rd" style="left:940px;top:993px">1.00</div>
<div class="td" style="left:1041px;top:983px">2022-03-30 11:10:30<br>未付</div>
<div class="td" style="left:1212px;top:993px">顶点免签支...</div>
<div class="td" style="left:1323px;top:993px">支付宝H...</div>
<div class="td" style="left:1414px;top:983px">正常付款0次<br>47.75.119.177</div>
<div class="st" style="left:1545px;top:994px;width:74px;height:18px;line-height:16px;background:#eee;border:1px solid #e2e2e2;color:#555">未付,未处理</div>
<div class="bx" style="left:1676px;top:991px;width:30px;background:#ff8000;border:1px solid #3a8ad0">封</div>
<div class="bx" style="left:1710px;top:991px;width:66px;background:#1e88e5">订单详情</div>
<div class="bx" style="left:1780px;top:991px;width:74px;background:#fc4b6c;border-radius:3px 0 0 3px;text-align:left;padding-left:8px;letter-spacing:.5px">设置为已支付</div>
<div class="td g" style="left:295px;top:1034px">20220330110935102485<br>C20220330110934929349</div>
<div class="td" style="left:526px;top:1034px">windows<br>正常订单</div>
<div class="td" style="left:647px;top:1034px"><span class="lk">ceshi</span><br>10001</div>
<div class="td g" style="left:758px;top:1044px">1.00</div>
<div class="td" style="left:859px;top:1044px">0.00</div>
<div class="td rd" style="left:940px;top:1044px">1.00</div>
<div class="td" style="left:1041px;top:1034px">2022-03-30 11:09:35<br>未付</div>
<div class="td" style="left:1212px;top:1044px">顶点免签支...</div>
<div class="td" style="left:1323px;top:1044px">支付宝H...</div>
<div class="td" style="left:1414px;top:1034px">正常付款0次<br>47.75.119.177</div>
<div class="st" style="left:1545px;top:1045px;width:74px;height:18px;line-height:16px;background:#eee;border:1px solid #e2e2e2;color:#555">未付,未处理</div>
<div class="bx" style="left:1676px;top:1042px;width:30px;background:#ff8000;border:1px solid #3a8ad0">封</div>
<div class="bx" style="left:1710px;top:1042px;width:66px;background:#1e88e5">订单详情</div>
<div class="bx" style="left:1780px;top:1042px;width:74px;background:#fc4b6c;border-radius:3px 0 0 3px;text-align:left;padding-left:8px;letter-spacing:.5px">设置为已支付</div>
<div class="td g" style="left:295px;top:1085px">20220330110856565155<br>C20220330110856876608</div>
<div class="td" style="left:526px;top:1085px">windows<br>正常订单</div>
<div class="td" style="left:647px;top:1085px"><span class="lk">ceshi</span><br>10001</div>
<div class="td g" style="left:758px;top:1095px">10.00</div>
<div class="td" style="left:859px;top:1095px">0.00</div>
<div class="td rd" style="left:940px;top:1095px">10.00</div>
<div class="td" style="left:1041px;top:1085px">2022-03-30 11:08:56<br>未付</div>
<div class="td" style="left:1212px;top:1095px">顶点免签支...</div>
<div class="td" style="left:1323px;top:1095px">支付宝H...</div>
<div class="td" style="left:1414px;top:1085px">正常付款0次<br>47.75.119.177</div>
<div class="st" style="left:1545px;top:1096px;width:74px;height:18px;line-height:16px;background:#eee;border:1px solid #e2e2e2;color:#555">未付,未处理</div>
<div class="bx" style="left:1676px;top:1093px;width:30px;background:#ff8000;border:1px solid #3a8ad0">封</div>
<div class="bx" style="left:1710px;top:1093px;width:66px;background:#1e88e5">订单详情</div>
<div class="bx" style="left:1780px;top:1093px;width:74px;background:#fc4b6c;border-radius:3px 0 0 3px;text-align:left;padding-left:8px;letter-spacing:.5px">设置为已支付</div>
<div class="td g" style="left:295px;top:1136px">20220330110740994956<br>C20220330110739434197</div>
<div class="td" style="left:526px;top:1136px">windows<br>正常订单</div>
<div class="td" style="left:647px;top:1136px"><span class="lk">ceshi</span><br>10001</div>
<div class="td g" style="left:758px;top:1146px">10.00</div>
<div class="td" style="left:859px;top:1146px">0.00</div>
<div class="td rd" style="left:940px;top:1146px">10.00</div>
<div class="td" style="left:1041px;top:1136px">2022-03-30 11:07:40<br>未付</div>
<div class="td" style="left:1212px;top:1146px">顶点免签支...</div>
<div class="td" style="left:1323px;top:1146px">支付宝H...</div>
<div class="td" style="left:1414px;top:1136px">正常付款0次<br>47.75.119.177</div>
<div class="st" style="left:1545px;top:1147px;width:74px;height:18px;line-height:16px;background:#eee;border:1px solid #e2e2e2;color:#555">未付,未处理</div>
<div class="bx" style="left:1676px;top:1144px;width:30px;background:#ff8000;border:1px solid #3a8ad0">封</div>
<div class="bx" style="left:1710px;top:1144px;width:66px;background:#1e88e5">订单详情</div>
<div class="bx" style="left:1780px;top:1144px;width:74px;background:#fc4b6c;border-radius:3px 0 0 3px;text-align:left;padding-left:8px;letter-spacing:.5px">设置为已支付</div>
<div class="td g" style="left:295px;top:1187px">20220330110557534910<br>C20220330110556474219</div>
<div class="td" style="left:526px;top:1187px">windows<br>正常订单</div>
<div class="td" style="left:647px;top:1187px"><span class="lk">ceshi</span><br>10001</div>
<div class="td g" style="left:758px;top:1197px">10.00</div>
<div class="td" style="left:859px;top:1197px">0.00</div>
<div class="td rd" style="left:940px;top:1197px">10.00</div>
<div class="td" style="left:1041px;top:1187px">2022-03-30 11:05:57<br>未付</div>
<div class="td" style="left:1212px;top:1197px">顶点免签支...</div>
<div class="td" style="left:1323px;top:1197px">支付宝H...</div>
<div class="td" style="left:1414px;top:1187px">正常付款0次<br>47.75.119.177</div>
<div class="st" style="left:1545px;top:1198px;width:74px;height:18px;line-height:16px;background:#eee;border:1px solid #e2e2e2;color:#555">未付,未处理</div>
<div class="bx" style="left:1676px;top:1195px;width:30px;background:#ff8000;border:1px solid #3a8ad0">封</div>
<div class="bx" style="left:1710px;top:1195px;width:66px;background:#1e88e5">订单详情</div>
<div class="bx" style="left:1780px;top:1195px;width:74px;background:#fc4b6c;border-radius:3px 0 0 3px;text-align:left;padding-left:8px;letter-spacing:.5px">设置为已支付</div>
<div class="td g" style="left:295px;top:1238px">20220330110520485748<br>C20220330110520688676</div>
<div class="td" style="left:526px;top:1238px">windows<br>正常订单</div>
<div class="td" style="left:647px;top:1238px"><span class="lk">ceshi</span><br>10001</div>
<div class="td g" style="left:758px;top:1248px">10.00</div>
<div class="td" style="left:859px;top:1248px">0.00</div>
<div class="td rd" style="left:940px;top:1248px">10.00</div>
<div class="td" style="left:1041px;top:1238px">2022-03-30 11:05:20<br>未付</div>
<div class="td" style="left:1212px;top:1248px">顶点免签支...</div>
<div class="td" style="left:1323px;top:1248px">支付宝H...</div>
<div class="td" style="left:1414px;top:1238px">正常付款0次<br>47.75.119.177</div>
<div class="st" style="left:1545px;top:1249px;width:74px;height:18px;line-height:16px;background:#eee;border:1px solid #e2e2e2;color:#555">未付,未处理</div>
<div class="bx" style="left:1676px;top:1246px;width:30px;background:#ff8000;border:1px solid #3a8ad0">封</div>
<div class="bx" style="left:1710px;top:1246px;width:66px;background:#1e88e5">订单详情</div>
<div class="bx" style="left:1780px;top:1246px;width:74px;background:#fc4b6c;border-radius:3px 0 0 3px;text-align:left;padding-left:8px;letter-spacing:.5px">设置为已支付</div>
<div class="td g" style="left:295px;top:1289px">20220330105611984951<br>C20220330105610451005</div>
<div class="td" style="left:526px;top:1289px">windows<br>正常订单</div>
<div class="td" style="left:647px;top:1289px"><span class="lk">ceshi</span><br>10001</div>
<div class="td g" style="left:758px;top:1299px">1.00</div>
<div class="td" style="left:859px;top:1299px">0.00</div>
<div class="td rd" style="left:940px;top:1299px">1.00</div>
<div class="td" style="left:1041px;top:1289px">2022-03-30 10:56:11<br>未付</div>
<div class="td" style="left:1212px;top:1299px">顶点免签支...</div>
<div class="td" style="left:1323px;top:1299px">支付宝H...</div>
<div class="td" style="left:1414px;top:1289px">正常付款0次<br>47.75.119.177</div>
<div class="st" style="left:1545px;top:1300px;width:74px;height:18px;line-height:16px;background:#eee;border:1px solid #e2e2e2;color:#555">未付,未处理</div>
<div class="bx" style="left:1676px;top:1297px;width:30px;background:#ff8000;border:1px solid #3a8ad0">封</div>
<div class="bx" style="left:1710px;top:1297px;width:66px;background:#1e88e5">订单详情</div>
<div class="bx" style="left:1780px;top:1297px;width:74px;background:#fc4b6c;border-radius:3px 0 0 3px;text-align:left;padding-left:8px;letter-spacing:.5px">设置为已支付</div>
<div class="td g" style="left:295px;top:1340px">20220330105538974955<br>C20220330105537932437</div>
<div class="td" style="left:526px;top:1340px">windows<br>正常订单</div>
<div class="td" style="left:647px;top:1340px"><span class="lk">ceshi</span><br>10001</div>
<div class="td g" style="left:758px;top:1350px">1.00</div>
<div class="td" style="left:859px;top:1350px">0.00</div>
<div class="td rd" style="left:940px;top:1350px">1.00</div>
<div class="td" style="left:1041px;top:1340px">2022-03-30 10:55:3...<br>未付</div>
<div class="td" style="left:1212px;top:1350px">顶点免签支...</div>
<div class="td" style="left:1323px;top:1350px">支付宝H...</div>
<div class="td" style="left:1414px;top:1340px">正常付款0次<br>47.75.119.177</div>
<div class="st" style="left:1545px;top:1351px;width:74px;height:18px;line-height:16px;background:#eee;border:1px solid #e2e2e2;color:#555">未付,未处理</div>
<div class="bx" style="left:1676px;top:1348px;width:30px;background:#ff8000;border:1px solid #3a8ad0">封</div>
<div class="bx" style="left:1710px;top:1348px;width:66px;background:#1e88e5">订单详情</div>
<div class="bx" style="left:1780px;top:1348px;width:74px;background:#fc4b6c;border-radius:3px 0 0 3px;text-align:left;padding-left:8px;letter-spacing:.5px">设置为已支付</div>
<div class="td g" style="left:295px;top:1391px">20220330105513491009<br>C20220330105513260781</div>
<div class="td" style="left:526px;top:1391px">windows<br>正常订单</div>
<div class="td" style="left:647px;top:1391px"><span class="lk">ceshi</span><br>10001</div>
<div class="td g" style="left:758px;top:1401px">1.00</div>
<div class="td" style="left:859px;top:1401px">0.00</div>
<div class="td rd" style="left:940px;top:1401px">1.00</div>
<div class="td" style="left:1041px;top:1391px">2022-03-30 10:55:13<br>未付</div>
<div class="td" style="left:1212px;top:1401px">顶点免签支...</div>
<div class="td" style="left:1323px;top:1401px">支付宝H...</div>
<div class="td" style="left:1414px;top:1391px">正常付款0次<br>47.75.119.177</div>
<div class="st" style="left:1545px;top:1402px;width:74px;height:18px;line-height:16px;background:#eee;border:1px solid #e2e2e2;color:#555">未付,未处理</div>
<div class="bx" style="left:1676px;top:1399px;width:30px;background:#ff8000;border:1px solid #3a8ad0">封</div>
<div class="bx" style="left:1710px;top:1399px;width:66px;background:#1e88e5">订单详情</div>
<div class="bx" style="left:1780px;top:1399px;width:74px;background:#fc4b6c;border-radius:3px 0 0 3px;text-align:left;padding-left:8px;letter-spacing:.5px">设置为已支付</div>
<div class="td g" style="left:295px;top:1442px">20220330105015555099<br>C20220330105015746892</div>
<div class="td" style="left:526px;top:1442px">windows<br>正常订单</div>
<div class="td" style="left:647px;top:1442px"><span class="lk">ceshi</span><br>10001</div>
<div class="td g" style="left:758px;top:1452px">10.00</div>
<div class="td" style="left:859px;top:1452px">0.00</div>
<div class="td rd" style="left:940px;top:1452px">10.00</div>
<div class="td" style="left:1041px;top:1442px">2022-03-30 10:50:15<br>未付</div>
<div class="td" style="left:1212px;top:1452px">顶点免签支...</div>
<div class="td" style="left:1323px;top:1452px">支付宝H...</div>
<div class="td" style="left:1414px;top:1442px">正常付款0次<br>47.75.119.177</div>
<div class="st" style="left:1545px;top:1453px;width:74px;height:18px;line-height:16px;background:#eee;border:1px solid #e2e2e2;color:#555">未付,未处理</div>
<div class="bx" style="left:1676px;top:1450px;width:30px;background:#ff8000;border:1px solid #3a8ad0">封</div>
<div class="bx" style="left:1710px;top:1450px;width:66px;background:#1e88e5">订单详情</div>
<div class="bx" style="left:1780px;top:1450px;width:74px;background:#fc4b6c;border-radius:3px 0 0 3px;text-align:left;padding-left:8px;letter-spacing:.5px">设置为已支付</div>
<div class="td g" style="left:295px;top:1493px">20220330104757100505<br>C20220330104757515315</div>
<div class="td" style="left:526px;top:1493px">windows<br>正常订单</div>
<div class="td" style="left:647px;top:1493px"><span class="lk">ceshi</span><br>10001</div>
<div class="td g" style="left:758px;top:1503px">10.00</div>
<div class="td" style="left:859px;top:1503px">0.00</div>
<div class="td rd" style="left:940px;top:1503px">10.00</div>
<div class="td" style="left:1041px;top:1493px">2022-03-30 10:47:57<br>未付</div>
<div class="td" style="left:1212px;top:1503px">顶点免签支...</div>
<div class="td" style="left:1323px;top:1503px">支付宝H...</div>
<div class="td" style="left:1414px;top:1493px">正常付款0次<br>47.75.119.177</div>
<div class="st" style="left:1545px;top:1504px;width:74px;height:18px;line-height:16px;background:#eee;border:1px solid #e2e2e2;color:#555">未付,未处理</div>
<div class="bx" style="left:1676px;top:1501px;width:30px;background:#ff8000;border:1px solid #3a8ad0">封</div>
<div class="bx" style="left:1710px;top:1501px;width:66px;background:#1e88e5">订单详情</div>
<div class="bx" style="left:1780px;top:1501px;width:74px;background:#fc4b6c;border-radius:3px 0 0 3px;text-align:left;padding-left:8px;letter-spacing:.5px">设置为已支付</div>
<div class="td g" style="left:295px;top:1544px">20220330104434505157<br>C20220330104434953403</div>
<div class="td" style="left:526px;top:1544px">windows<br>正常订单</div>
<div class="td" style="left:647px;top:1544px"><span class="lk">ceshi</span><br>10001</div>
<div class="td g" style="left:758px;top:1554px">10.00</div>
<div class="td" style="left:859px;top:1554px">0.00</div>
<div class="td rd" style="left:940px;top:1554px">10.00</div>
<div class="td" style="left:1041px;top:1544px">2022-03-30 10:44:3...<br>未付</div>
<div class="td" style="left:1212px;top:1554px">顶点免签支...</div>
<div class="td" style="left:1323px;top:1554px">支付宝H...</div>
<div class="td" style="left:1414px;top:1544px">正常付款0次<br>47.75.119.177</div>
<div class="st" style="left:1545px;top:1555px;width:74px;height:18px;line-height:16px;background:#eee;border:1px solid #e2e2e2;color:#555">未付,未处理</div>
<div class="bx" style="left:1676px;top:1552px;width:30px;background:#ff8000;border:1px solid #3a8ad0">封</div>
<div class="bx" style="left:1710px;top:1552px;width:66px;background:#1e88e5">订单详情</div>
<div class="bx" style="left:1780px;top:1552px;width:74px;background:#fc4b6c;border-radius:3px 0 0 3px;text-align:left;padding-left:8px;letter-spacing:.5px">设置为已支付</div>
<div class="td g" style="left:295px;top:1595px">20220330104345495152<br>C20220330104345690075</div>
<div class="td" style="left:526px;top:1595px">windows<br>正常订单</div>
<div class="td" style="left:647px;top:1595px"><span class="lk">ceshi</span><br>10001</div>
<div class="td g" style="left:758px;top:1605px">100.00</div>
<div class="td" style="left:859px;top:1605px">0.00</div>
<div class="td rd" style="left:940px;top:1605px">100.00</div>
<div class="td" style="left:1041px;top:1595px">2022-03-30 10:43:4...<br>未付</div>
<div class="td" style="left:1212px;top:1605px">顶点免签支...</div>
<div class="td" style="left:1323px;top:1605px">支付宝H...</div>
<div class="td" style="left:1414px;top:1595px">正常付款0次<br>47.75.119.177</div>
<div class="st" style="left:1545px;top:1606px;width:74px;height:18px;line-height:16px;background:#eee;border:1px solid #e2e2e2;color:#555">未付,未处理</div>
<div class="bx" style="left:1676px;top:1603px;width:30px;background:#ff8000;border:1px solid #3a8ad0">封</div>
<div class="bx" style="left:1710px;top:1603px;width:66px;background:#1e88e5">订单详情</div>
<div class="bx" style="left:1780px;top:1603px;width:74px;background:#fc4b6c;border-radius:3px 0 0 3px;text-align:left;padding-left:8px;letter-spacing:.5px">设置为已支付</div>
<div class="td g" style="left:295px;top:1646px">20220330104225495410<br>C20220330104225517150</div>
<div class="td" style="left:526px;top:1646px">windows<br>正常订单</div>
<div class="td" style="left:647px;top:1646px"><span class="lk">ceshi</span><br>10001</div>
<div class="td g" style="left:758px;top:1656px">10.00</div>
<div class="td" style="left:859px;top:1656px">0.00</div>
<div class="td rd" style="left:940px;top:1656px">10.00</div>
<div class="td" style="left:1041px;top:1646px">2022-03-30 10:42:25<br>未付</div>
<div class="td" style="left:1212px;top:1656px">顶点免签支...</div>
<div class="td" style="left:1323px;top:1656px">支付宝H...</div>
<div class="td" style="left:1414px;top:1646px">正常付款0次<br>47.75.119.177</div>
<div class="st" style="left:1545px;top:1657px;width:74px;height:18px;line-height:16px;background:#eee;border:1px solid #e2e2e2;color:#555">未付,未处理</div>
<div class="bx" style="left:1676px;top:1654px;width:30px;background:#ff8000;border:1px solid #3a8ad0">封</div>
<div class="bx" style="left:1710px;top:1654px;width:66px;background:#1e88e5">订单详情</div>
<div class="bx" style="left:1780px;top:1654px;width:74px;background:#fc4b6c;border-radius:3px 0 0 3px;text-align:left;padding-left:8px;letter-spacing:.5px">设置为已支付</div>
<div class="td g" style="left:295px;top:1697px">20220330104121499951<br>C20220330104121227471</div>
<div class="td" style="left:526px;top:1697px">windows<br>正常订单</div>
<div class="td" style="left:647px;top:1697px"><span class="lk">ceshi</span><br>10001</div>
<div class="td g" style="left:758px;top:1707px">100.00</div>
<div class="td" style="left:859px;top:1707px">0.00</div>
<div class="td rd" style="left:940px;top:1707px">100.00</div>
<div class="td" style="left:1041px;top:1697px">2022-03-30 10:41:21<br>未付</div>
<div class="td" style="left:1212px;top:1707px">顶点免签支...</div>
<div class="td" style="left:1323px;top:1707px">支付宝H...</div>
<div class="td" style="left:1414px;top:1697px">正常付款0次<br>47.75.119.177</div>
<div class="st" style="left:1545px;top:1708px;width:74px;height:18px;line-height:16px;background:#eee;border:1px solid #e2e2e2;color:#555">未付,未处理</div>
<div class="bx" style="left:1676px;top:1705px;width:30px;background:#ff8000;border:1px solid #3a8ad0">封</div>
<div class="bx" style="left:1710px;top:1705px;width:66px;background:#1e88e5">订单详情</div>
<div class="bx" style="left:1780px;top:1705px;width:74px;background:#fc4b6c;border-radius:3px 0 0 3px;text-align:left;padding-left:8px;letter-spacing:.5px">设置为已支付</div>
<div class="td g" style="left:295px;top:1748px">20220330103917535757<br>C20220330103917501089</div>
<div class="td" style="left:526px;top:1748px">windows<br>正常订单</div>
<div class="td" style="left:647px;top:1748px"><span class="lk">ceshi</span><br>10001</div>
<div class="td g" style="left:758px;top:1758px">10.00</div>
<div class="td" style="left:859px;top:1758px">0.00</div>
<div class="td rd" style="left:940px;top:1758px">10.00</div>
<div class="td" style="left:1041px;top:1748px">2022-03-30 10:39:17<br>未付</div>
<div class="td" style="left:1212px;top:1758px">顶点免签支...</div>
<div class="td" style="left:1323px;top:1758px">支付宝H...</div>
<div class="td" style="left:1414px;top:1748px">正常付款0次<br>47.57.189.17</div>
<div class="st" style="left:1545px;top:1759px;width:74px;height:18px;line-height:16px;background:#eee;border:1px solid #e2e2e2;color:#555">未付,未处理</div>
<div class="bx" style="left:1676px;top:1756px;width:30px;background:#ff8000;border:1px solid #3a8ad0">封</div>
<div class="bx" style="left:1710px;top:1756px;width:66px;background:#1e88e5">订单详情</div>
<div class="bx" style="left:1780px;top:1756px;width:74px;background:#fc4b6c;border-radius:3px 0 0 3px;text-align:left;padding-left:8px;letter-spacing:.5px">设置为已支付</div>
<div class="td g" style="left:295px;top:1799px">20220330103819984853<br>C20220330103818639476</div>
<div class="td" style="left:526px;top:1799px">windows<br>正常订单</div>
<div class="td" style="left:647px;top:1799px"><span class="lk">ceshi</span><br>10001</div>
<div class="td g" style="left:758px;top:1809px">10.00</div>
<div class="td" style="left:859px;top:1809px">0.00</div>
<div class="td rd" style="left:940px;top:1809px">10.00</div>
<div class="td" style="left:1041px;top:1799px">2022-03-30 10:38:19<br>未付</div>
<div class="td" style="left:1212px;top:1809px">顶点免签支...</div>
<div class="td" style="left:1323px;top:1809px">支付宝H...</div>
<div class="td" style="left:1414px;top:1799px">正常付款0次<br>47.57.189.17</div>
<div class="st" style="left:1545px;top:1810px;width:74px;height:18px;line-height:16px;background:#eee;border:1px solid #e2e2e2;color:#555">未付,未处理</div>
<div class="bx" style="left:1676px;top:1807px;width:30px;background:#ff8000;border:1px solid #3a8ad0">封</div>
<div class="bx" style="left:1710px;top:1807px;width:66px;background:#1e88e5">订单详情</div>
<div class="bx" style="left:1780px;top:1807px;width:74px;background:#fc4b6c;border-radius:3px 0 0 3px;text-align:left;padding-left:8px;letter-spacing:.5px">设置为已支付</div>
<div class="td g" style="left:295px;top:1850px">20220330103707519754<br>C20220330103707487510</div>
<div class="td" style="left:526px;top:1850px">windows<br>正常订单</div>
<div class="td" style="left:647px;top:1850px"><span class="lk">ceshi</span><br>10001</div>
<div class="td g" style="left:758px;top:1860px">100.00</div>
<div class="td" style="left:859px;top:1860px">0.00</div>
<div class="td rd" style="left:940px;top:1860px">100.00</div>
<div class="td" style="left:1041px;top:1850px">2022-03-30 10:37:07<br>未付</div>
<div class="td" style="left:1212px;top:1860px">顶点免签支...</div>
<div class="td" style="left:1323px;top:1860px">支付宝H...</div>
<div class="td" style="left:1414px;top:1850px">正常付款0次<br>47.57.189.17</div>
<div class="st" style="left:1545px;top:1861px;width:74px;height:18px;line-height:16px;background:#eee;border:1px solid #e2e2e2;color:#555">未付,未处理</div>
<div class="bx" style="left:1676px;top:1858px;width:30px;background:#ff8000;border:1px solid #3a8ad0">封</div>
<div class="bx" style="left:1710px;top:1858px;width:66px;background:#1e88e5">订单详情</div>
<div class="bx" style="left:1780px;top:1858px;width:74px;background:#fc4b6c;border-radius:3px 0 0 3px;text-align:left;padding-left:8px;letter-spacing:.5px">设置为已支付</div>
<div class="td g" style="left:295px;top:1901px">20220330103642975610<br>C20220330103642564724</div>
<div class="td" style="left:526px;top:1901px">windows<br>正常订单</div>
<div class="td" style="left:647px;top:1901px"><span class="lk">ceshi</span><br>10001</div>
<div class="td g" style="left:758px;top:1911px">100.00</div>
<div class="td" style="left:859px;top:1911px">0.00</div>
<div class="td rd" style="left:940px;top:1911px">100.00</div>
<div class="td" style="left:1041px;top:1901px">2022-03-30 10:36:42<br>未付</div>
<div class="td" style="left:1212px;top:1911px">顶点免签支...</div>
<div class="td" style="left:1323px;top:1911px">支付宝H...</div>
<div class="td" style="left:1414px;top:1901px">正常付款0次<br>47.57.189.17</div>
<div class="st" style="left:1545px;top:1912px;width:74px;height:18px;line-height:16px;background:#eee;border:1px solid #e2e2e2;color:#555">未付,未处理</div>
<div class="bx" style="left:1676px;top:1909px;width:30px;background:#ff8000;border:1px solid #3a8ad0">封</div>
<div class="bx" style="left:1710px;top:1909px;width:66px;background:#1e88e5">订单详情</div>
<div class="bx" style="left:1780px;top:1909px;width:74px;background:#fc4b6c;border-radius:3px 0 0 3px;text-align:left;padding-left:8px;letter-spacing:.5px">设置为已支付</div>
<div class="a" style="left:279px;top:1984px;width:141px;height:30px;border:1px solid #e6e6e6;border-radius:2px;background:#fff"></div>
<div class="a" style="left:279px;top:1984px;width:36px;height:30px;background:#009688;border-radius:2px;color:#fff;font-size:13px;line-height:30px;text-align:center">1</div>
<div class="a" style="left:352px;top:1985px;width:1px;height:28px;background:#e6e6e6"></div>
<div class="a" style="left:315px;top:1984px;width:37px;height:30px;color:#333;font-size:13px;line-height:30px;text-align:center">2</div>
<div class="a" style="left:353px;top:1984px;width:66px;height:30px;color:#333;font-size:13px;line-height:30px;text-align:center">下一页</div>
<div class="a" style="left:423px;top:1986px;width:76px;height:29px;border:1px solid #9a9a9a;border-radius:2px;background:#fff;color:#0a5a0a;font-size:14px;line-height:27px;padding-left:5px">30条</div>
<div class="a" style="left:486px;top:1997px;width:0;height:0;border-left:3px solid transparent;border-right:3px solid transparent;border-top:5.5px solid #0a5a0a"></div>
<div class="a" style="left:230px;top:2077px;width:1673px;height:50px;background:#fdfdfd;border-top:1px solid #d2d6d9"></div>
<div class="a" style="left:245px;top:2092px;font-size:13px;line-height:20px;color:#67757c;white-space:nowrap">© 2018-2019 聚合支付 版权所有</div>
<div class="a" style="left:1587px;top:2092px;font-size:13px;line-height:20px;color:#67757c;white-space:nowrap">平台首页</div>
<div class="a" style="left:1655px;top:2101px;width:3px;height:3px;border-radius:50%;background:#c8c8c8"></div>
<div class="a" style="left:1684px;top:2092px;font-size:13px;line-height:20px;color:#67757c;white-space:nowrap">大数据商业开源版 系统版本:6.04</div>
</body></html>
